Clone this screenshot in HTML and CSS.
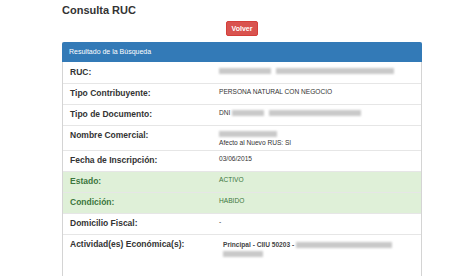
FILE: index.html
```html
<!DOCTYPE html>
<html lang="es">
<head>
    <meta charset="UTF-8">
    <title>Consulta RUC</title>
    <link rel="stylesheet" href="styles.css">
</head>
<body>
    <div class="container">
        <h1>Consulta RUC</h1>
        <div class="actions"><button class="btn-danger">Volver</button></div>

        <div class="panel">
            <div class="panel-heading">Resultado de la Búsqueda</div>
            <table class="result">
                <tr>
                    <td class="label">RUC:</td>
                    <td class="value"><span class="blur" style="width:52px"></span><span class="blur" style="width:118px"></span></td>
                </tr>
                <tr>
                    <td class="label">Tipo Contribuyente:</td>
                    <td class="value">PERSONA NATURAL CON NEGOCIO</td>
                </tr>
                <tr>
                    <td class="label">Tipo de Documento:</td>
                    <td class="value">DNI <span class="blur" style="width:32px"></span><span class="blur" style="width:92px"></span></td>
                </tr>
                <tr>
                    <td class="label">Nombre Comercial:</td>
                    <td class="value"><span class="blur" style="width:58px"></span><br>Afecto al Nuevo RUS: SI</td>
                </tr>
                <tr>
                    <td class="label">Fecha de Inscripción:</td>
                    <td class="value">03/06/2015</td>
                </tr>
                <tr class="success">
                    <td class="label">Estado:</td>
                    <td class="value">ACTIVO</td>
                </tr>
                <tr class="success">
                    <td class="label">Condición:</td>
                    <td class="value">HABIDO</td>
                </tr>
                <tr>
                    <td class="label">Domicilio Fiscal:</td>
                    <td class="value">-</td>
                </tr>
                <tr>
                    <td class="label">Actividad(es) Económica(s):</td>
                    <td class="value">
                        <div class="activity">Principal - CIIU 50203 - <span class="blur" style="width:96px"></span><br><span class="blur" style="width:40px"></span></div>
                    </td>
                </tr>
            </table>
        </div>
    </div>
</body>
</html>
```

FILE: styles.css
```css
body { margin: 0; background-color: #fff; color: #333; font-family: 'Liberation Sans', Arial, sans-serif; overflow: hidden; }
.container { width: 360px; margin-left: 62px; }
h1 { font-size: 11px; line-height: 14px; font-weight: bold; margin: 0; padding-top: 3px; }
.actions { text-align: center; margin-top: 4px; height: 15px; }
.btn-danger { height: 15px; padding: 0 5px; border: 1px solid #d43f3a; border-radius: 2px; background-color: #d9534f; color: #fff; font-family: inherit; font-size: 7px; font-weight: bold; line-height: 13px; vertical-align: top; }
.panel { margin-top: 6px; border: 1px solid #d4d4d4; border-top: none; border-radius: 2px; padding-bottom: 40px; }
.panel-heading { background-color: #337ab7; color: #fff; font-size: 7px; height: 20px; line-height: 20px; padding-left: 7px; margin: 0 -1px; border-radius: 2px 2px 0 0; }
.result { width: 100%; border-collapse: collapse; }
.result td { border-top: 1px solid #e6e6e6; vertical-align: top; }
.result tr:first-child td { border-top: none; }
.label { width: 135px; padding: 4px 7px 6px; font-size: 8.5px; font-weight: bold; line-height: 10px; }
.result tr:first-child .label { padding-top: 5px; }
.value { padding: 3px 7px 3px 7px; font-size: 6.6px; line-height: 9px; }
.result tr:first-child .value { padding-top: 4px; }
.success td { background-color: #dff0d8; color: #3c763d; }
.blur { display: inline-block; height: 6px; margin-right: 5px; vertical-align: middle; background-color: #c9c9c9; filter: blur(0.8px); }
.activity { padding: 2px 4px 0; font-weight: bold; color: #444; }
.activity .blur { margin-right: 0; }
```
